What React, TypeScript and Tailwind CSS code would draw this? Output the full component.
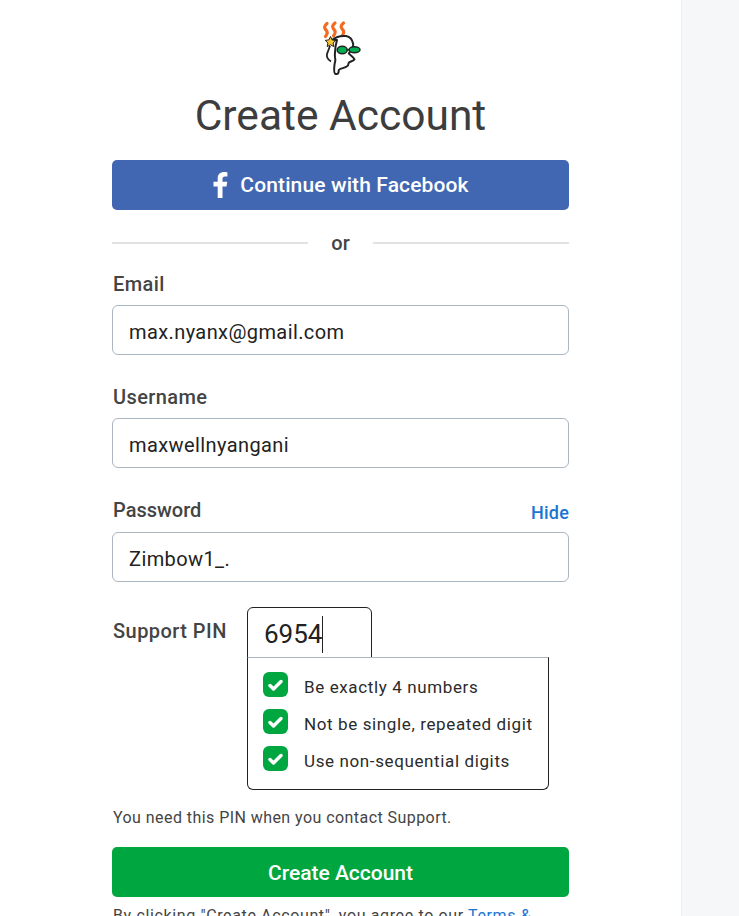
const font = "font-['Roboto','Liberation_Sans',sans-serif]";

function Logo() {
  return (
    <svg width="44" height="60" viewBox="0 0 44 60" fill="none" className="overflow-visible">
      <g stroke="#f26b21" strokeWidth="3.200" strokeLinecap="round" fill="none">
        <path d="M7 3.500c-3 2.500-3 4.500-1 6.500s1.500 4-.5 6.500" />
        <path d="M15 3c-3 2.500-3 4.500-1 6.500s1.500 4-.5 6.500" />
        <path d="M23.500 3c-3 2.500-3 4.500-1 6.500s1.500 4-.5 6.500" />
      </g>
      <path d="M12 20c3-2.500 9-4.500 14-4 4 .7 6.500 4 7.200 8 .4 3.500-2.400 6.500-4.400 9.300 1.500 2 4.700 3.700 5.700 6-1.500 2-4.500 2.200-5.700 3.400-.2 2-.5 3.200-2.300 4-3 1.500-6.500 1.800-7.700 3.300-.3 2.500-.1 4.500-3.300 4-1.700-.5-1.500-5-1-9.300.3-3 1.500-4 .5-7.500-.5-3 .2-6 .4-9.200.1-2.500.9-4.900 1.600-8z" fill="#fff" stroke="#222" strokeWidth="2" strokeLinejoin="round" />
      <path d="M10 26l-3 8c-.7 3 1.500 6 4 7.500" stroke="#222" strokeWidth="1.800" fill="none" />
      <path d="M10.500 16.500l1.600 3.400 3.700.5-2.700 2.600.7 3.600-3.300-1.800-3.300 1.800.7-3.600-2.700-2.600 3.700-.5z" fill="#f7c531" stroke="#222" strokeWidth="1" />
      <ellipse cx="22.200" cy="30" rx="5" ry="3.800" fill="#00b050" stroke="#222" strokeWidth="1.500" />
      <ellipse cx="34.500" cy="29.800" rx="5.500" ry="3" fill="#00b050" stroke="#222" strokeWidth="1.500" />
      <path d="M27 29.800h2.500" stroke="#222" strokeWidth="1.500" />
    </svg>
  );
}

function Field({ label, value, hide, className, labelClass }: { label: string; value: string; hide?: boolean; className?: string; labelClass?: string }) {
  return (
    <div className={`flex flex-col ${className ?? ""}`}>
      <div className="flex items-end justify-between h-[26px] pl-px">
        <span className={`text-[20px] leading-[26px] font-medium text-[#444444] ${labelClass ?? "tracking-[0.4px]"}`}>{label}</span>
        {hide && <span className="text-[18px] leading-[22px] font-medium tracking-[0.2px] text-[#1976d2]">Hide</span>}
      </div>
      <div className="mt-[8px] h-[50px] rounded-[6px] border border-[#aab7c2] bg-white px-4 pt-[3px] flex items-center text-[20px] tracking-[0.4px] text-[#222222]">
        {value}
      </div>
    </div>
  );
}

function Check({ text }: { text: string }) {
  return (
    <div className="flex items-center h-[37px]">
      <span className="w-[25px] h-[25px] shrink-0 mb-[4px] rounded-[6px] bg-[#00a63f] flex items-center justify-center">
        <svg width="15" height="12" viewBox="0 0 15 12" fill="none">
          <path d="M2 6.500l3.500 3.500L13 2.500" stroke="#fff" strokeWidth="3.400" strokeLinecap="round" strokeLinejoin="round" />
        </svg>
      </span>
      <span className="ml-4 pt-[2px] text-[17px] tracking-[0.62px] text-[#2b2b2b] whitespace-nowrap">{text}</span>
    </div>
  );
}

export default function App() {
  return (
    <div className={`${font} flex h-[916px] w-[739px] overflow-hidden bg-white`}>
      <main className="w-[681px] shrink-0 pl-[112px] pt-[20px]">
        <div className="w-[457px]">
          <div className="flex justify-center h-[60px] pl-[2px]">
            <Logo />
          </div>
          <h1 className="text-center text-[42.500px] leading-[56px] mt-[8px] text-[#3d3d3d]">Create Account</h1>
          <button className="mt-[16px] w-full h-[50px] rounded-[5px] bg-[#4267b2] flex items-center justify-center pt-[2px] text-white text-[21px] font-medium tracking-[0.12px]">
            <svg width="16" height="26" viewBox="0 0 16 26" fill="#fff" className="mr-[12px] -mt-[2px]">
              <path d="M10.500 26V14.500h4l.7-4.700h-4.700V7c0-1.400.6-2.400 2.500-2.400h2.400V.4C14.900.3 13.500.1 12 .1 8.400.1 5.700 2.300 5.700 6.400v3.400H1.500v4.700h4.200V26z" />
            </svg>
            Continue with Facebook
          </button>
          <div className="mt-[22px] flex items-center h-[22px]">
            <div className="flex-1 h-[2px] bg-[#e2e2e2]" />
            <span className="w-[65px] text-center text-[20px] font-medium text-[#444444]">or</span>
            <div className="flex-1 h-[2px] bg-[#e2e2e2]" />
          </div>
          <div className="mt-[17px] flex flex-col gap-[29px]">
            <Field label="Email" value="max.nyanx@gmail.com" />
            <Field label="Username" value="maxwellnyangani" />
            <Field label="Password" value="Zimbow1_." hide labelClass="tracking-[0px] -translate-y-px" className="mt-px" />
          </div>
          <div className="mt-[25px] flex">
            <span className="w-[135px] pl-px pt-[11px] text-[20px] leading-[26px] font-medium text-[#444444] tracking-[0.45px]">Support PIN</span>
            <div className="flex flex-col">
              <div className="w-[125px] h-[51px] rounded-t-[6px] border border-[#222222] px-4 pt-[3px] flex items-center text-[26px] text-[#222222]">
                6954<span className="w-px h-[37px] bg-[#222222]" />
              </div>
              <div className="w-[302px] h-[133px] -mt-px rounded-b-[6px] border border-[#222222] border-t-[#aab7c2] px-[15px] pt-[10px]">
                <Check text="Be exactly 4 numbers" />
                <Check text="Not be single, repeated digit" />
                <Check text="Use non-sequential digits" />
              </div>
            </div>
          </div>
          <p className="mt-[17px] pl-px text-[16px] leading-[22px] tracking-[0.44px] text-[#444444]">You need this PIN when you contact Support.</p>
          <button className="mt-[18px] w-full h-[50px] rounded-[5px] bg-[#00a63f] pt-[3px] text-white text-[21px] font-medium">Create Account</button>
          <p className="mt-[8px] pl-px text-[16px] leading-[22px] tracking-[0.63px] text-[#444444] whitespace-nowrap">
            By clicking "Create Account", you agree to our <span className="text-[#1976d2]">Terms &amp;</span>
          </p>
        </div>
      </main>
      <aside className="flex-1 border-l border-[#eceef0] bg-[#f5f7f8]" />
    </div>
  );
}
